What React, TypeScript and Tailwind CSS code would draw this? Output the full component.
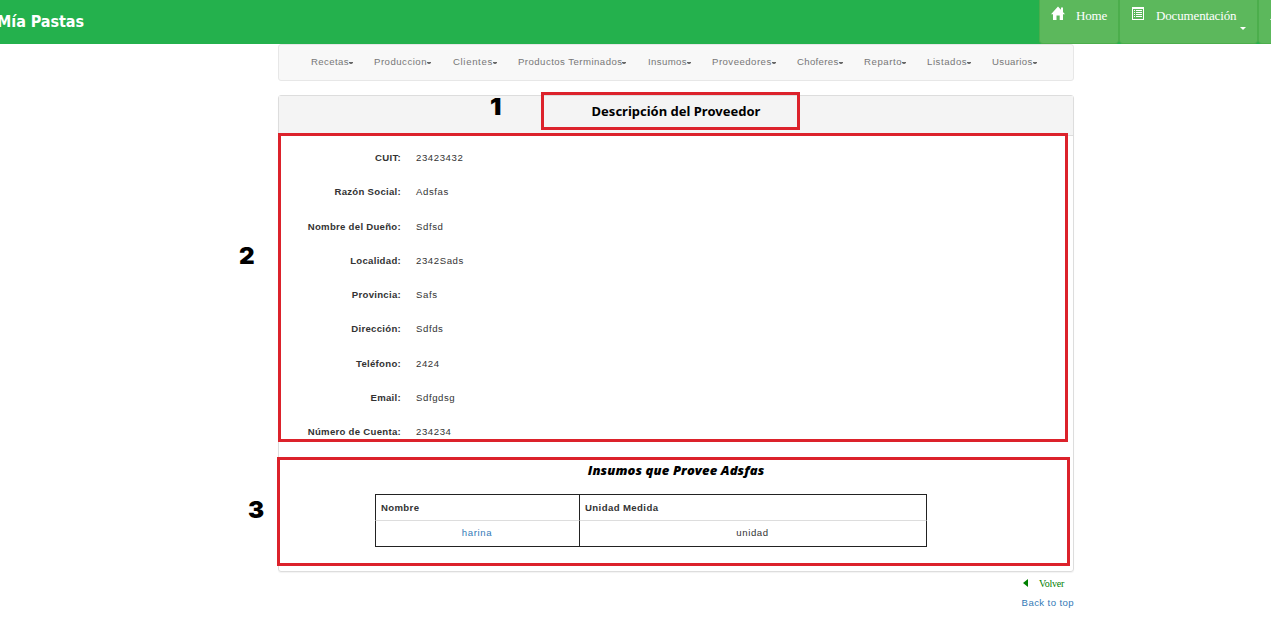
const menu = [
  { label: 'Recetas', box: 'w-[63px]', track: 'tracking-[0.38px]' },
  { label: 'Produccion', box: 'w-[79px]', track: 'tracking-[0.5px]' },
  { label: 'Clientes', box: 'w-[65px]', track: 'tracking-[0.65px]' },
  { label: 'Productos Terminados', box: 'w-[130px]', track: 'tracking-[0.46px]' },
  { label: 'Insumos', box: 'w-[64px]', track: 'tracking-[0.38px]' },
  { label: 'Proveedores', box: 'w-[85px]', track: 'tracking-[0.48px]' },
  { label: 'Choferes', box: 'w-[67px]', track: 'tracking-[0.34px]' },
  { label: 'Reparto', box: 'w-[63px]', track: 'tracking-[0.56px]' },
  { label: 'Listados', box: 'w-[65px]', track: 'tracking-[0.56px]' },
  { label: 'Usuarios', box: 'w-[60px]', track: 'tracking-[0.34px]' },
];

const fields = [
  ['CUIT:', '23423432'],
  ['Razón Social:', 'Adsfas'],
  ['Nombre del Dueño:', 'Sdfsd'],
  ['Localidad:', '2342Sads'],
  ['Provincia:', 'Safs'],
  ['Dirección:', 'Sdfds'],
  ['Teléfono:', '2424'],
  ['Email:', 'Sdfgdsg'],
  ['Número de Cuenta:', '234234'],
];

function HomeIcon() {
  return (
    <svg className="mt-[6px] h-[14px] w-[14px] shrink-0" viewBox="0 0 14 14" fill="white">
      <path d="M7 0.6 14 8.2h-2V14H8.7V9.5H5.5V14H2V8.2H0Z" />
      <path d="M10 1.5h2v4.5h-2z" />
    </svg>
  );
}

function ListIcon() {
  return (
    <svg className="mt-[7px] h-[13px] w-[12px] shrink-0" viewBox="0 0 12 13" fill="white">
      <path fillRule="evenodd" d="M0 0h12v13H0ZM1 2v10h10V2Z" />
      <path d="M2 3h1v1H2zM4 3h6v1H4zM2 5h1v1H2zM4 5h6v1H4zM2 7h1v1H2zM4 7h6v1H4zM2 9h1v1H2zM4 9h6v1H4z" />
    </svg>
  );
}

function Header() {
  return (
    <header className="flex h-11 justify-between overflow-hidden bg-[#24b14d]">
      <div className="-ml-[3px] pt-[10px] font-['DejaVu_Sans_Condensed','DejaVu_Sans',sans-serif] text-[16px] leading-[24px] font-bold tracking-[-0.05px] whitespace-nowrap text-white">
        Mía Pastas
      </div>
      <nav className="flex w-[232px] shrink-0 font-['Liberation_Serif',serif] text-[13px] tracking-[-0.15px] text-white">
        <a className="flex h-11 w-[80px] shrink-0 rounded-b border-x border-b border-[#4cae4c] bg-[#5cb85c] pl-[11px]">
          <HomeIcon />
          <span className="ml-[11px] pt-2 leading-4">Home</span>
        </a>
        <a className="relative flex h-11 w-[139px] shrink-0 rounded-b border-x border-b border-[#4cae4c] bg-[#5cb85c] pl-[12px]">
          <ListIcon />
          <span className="ml-[12px] pt-2 leading-4">Documentación</span>
          <svg className="absolute top-[27px] left-[120px] h-[3px] w-[6px]" viewBox="0 0 6 3" fill="white">
            <path d="M0 0h6L3 3Z" />
          </svg>
        </a>
        <a className="flex h-11 w-10 shrink-0 rounded-b border-x border-b border-[#4cae4c] bg-[#5cb85c] pl-[11px]">
          <svg className="mt-[17px] h-[3px] w-[4px] shrink-0" viewBox="0 0 4 3" fill="white">
            <path d="M0 3 2 0h2v3Z" />
          </svg>
        </a>
      </nav>
    </header>
  );
}

export default function App() {
  return (
    <div className="relative h-[625px] w-[1271px] overflow-hidden bg-white font-['Liberation_Sans',sans-serif] text-[9.6px] text-[#333]">
      <Header />
      <main className="ml-[278px] w-[796px]">
        <nav className="flex h-[37px] rounded-[3px] border border-[#e7e7e7] bg-[#f8f8f8] pl-8 text-[#777]">
          {menu.map((m) => (
            <a key={m.label} className={`flex shrink-0 pt-[10px] leading-[14px] whitespace-nowrap ${m.box} ${m.track}`}>
              {m.label}
              <svg className="mt-[7px] h-[2px] w-[4px]" viewBox="0 0 4 2" fill="#666">
                <path d="M0 0h4v1L2.5 2h-1L0 1Z" />
              </svg>
            </a>
          ))}
        </nav>

        <section className="mt-[14px] h-[477px] rounded-[3px] border border-[#ddd] shadow-[0_1px_1px_rgba(0,0,0,0.05)]">
          <h1 className="h-10 border-b border-[#ddd] bg-[#f4f4f4] pt-[5px] text-center font-['Noto_Sans',sans-serif] text-[13px] leading-5 font-bold text-black">
            Descripción del Proveedor
          </h1>
          <dl className="flex h-[321px] flex-col pt-[4.4px]">
            {fields.map(([label, value]) => (
              <div key={label} className="flex h-[34.25px] shrink-0 items-center leading-[15px]">
                <dt className="w-[122px] text-right font-bold tracking-[0.28px] whitespace-nowrap">{label}</dt>
                <dd className="ml-[15px] tracking-[0.58px]">{value}</dd>
              </div>
            ))}
          </dl>
          <h2 className="mt-[3px] text-center font-['Open_Sans',sans-serif] text-[13px] leading-5 font-extrabold tracking-[0.1px] text-black italic">
            Insumos que Provee Adsfas
          </h2>
          <div className="mt-[14px] ml-24 grid h-[53px] w-[552px] grid-cols-[205px_347px] grid-rows-[26px_27px]">
            <div className="border-t border-l border-[#222] pt-[6px] pl-[5px] leading-[14px] font-bold tracking-[0.35px]">Nombre</div>
            <div className="-ml-px border-x border-t border-[#222] pt-[6px] pl-[5px] leading-[14px] font-bold tracking-[0.4px]">Unidad Medida</div>
            <div className="border-b border-l border-t border-[#222] border-t-[#ddd] pt-[5px] pr-[2px] text-center leading-[14px] tracking-[0.6px] text-[#337ab7]">harina</div>
            <div className="-ml-px border border-[#222] border-t-[#ddd] pt-[5px] pr-px text-center leading-[14px] tracking-[0.6px]">unidad</div>
          </div>
        </section>

        <footer className="flex flex-col items-end">
          <a className="mt-[3px] mr-[10px] flex h-4 items-center font-['Liberation_Serif',serif] text-[10px] tracking-[-0.25px] text-[#008000]">
            <svg className="mr-[11px] h-2 w-[5px]" viewBox="0 0 5 8" fill="#008000">
              <path d="M5 0v8L0 4Z" />
            </svg>
            Volver
          </a>
          <a className="mt-[5px] leading-[14px] tracking-[0.4px] text-[#337ab7]">Back to top</a>
        </footer>
      </main>

      <div className="absolute top-[92px] left-[541px] h-[38px] w-[259px] border-3 border-[#dc222b]" />
      <div className="absolute top-[133px] left-[278px] h-[309px] w-[790px] border-3 border-[#dc222b]" />
      <div className="absolute top-[457px] left-[277px] h-[109px] w-[793px] border-3 border-[#dc222b]" />
      <div className="absolute top-[92px] left-[490px] origin-left scale-x-110 font-['Inter',sans-serif] text-[23px] leading-[30px] font-black text-black">1</div>
      <div className="absolute top-[241px] left-[239px] origin-left scale-x-105 font-['Inter',sans-serif] text-[23px] leading-[30px] font-black text-black">2</div>
      <div className="absolute top-[495px] left-[248px] origin-left scale-x-105 font-['Inter',sans-serif] text-[23px] leading-[30px] font-black text-black">3</div>
    </div>
  );
}
